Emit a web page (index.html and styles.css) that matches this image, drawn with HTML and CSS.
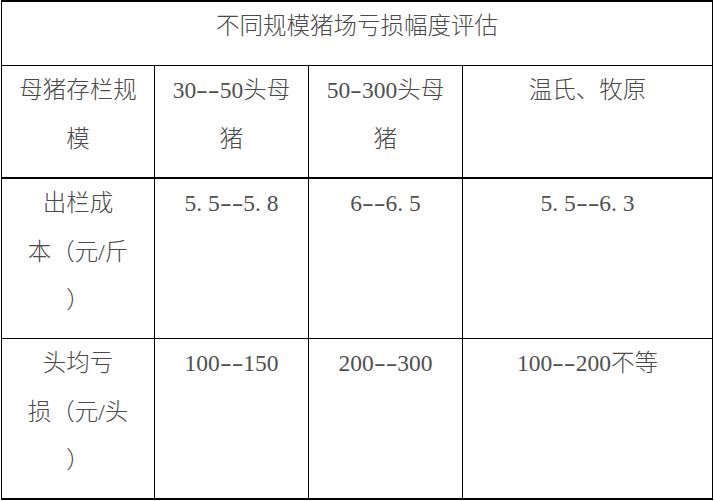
FILE: index.html
```html
<!DOCTYPE html>
<html lang="zh-CN">
<head>
<meta charset="utf-8">
<title>不同规模猪场亏损幅度评估</title>
<link rel="stylesheet" href="styles.css">
</head>
<body>
<div class="sheet">
  <div class="cell title">不同规模猪场亏损幅度评估</div>

  <div class="cell c1 r2">母猪存栏规<br>模</div>
  <div class="cell r2"><span class="num">30<span class="h h2">--</span>50</span>头母<br>猪</div>
  <div class="cell r2"><span class="num">50<span class="h h1">-</span>300</span>头母<br>猪</div>
  <div class="cell c4 r2">温氏、牧原</div>

  <div class="cell c1 r3">出栏成<br>本（元/斤<br>）</div>
  <div class="cell r3"><span class="num">5<span class="p">.</span>5<span class="h h2">--</span>5<span class="p">.</span>8</span></div>
  <div class="cell r3"><span class="num">6<span class="h h2">--</span>6<span class="p">.</span>5</span></div>
  <div class="cell c4 r3"><span class="num">5<span class="p">.</span>5<span class="h h2">--</span>6<span class="p">.</span>3</span></div>

  <div class="cell c1 r4">头均亏<br>损（元/头<br>）</div>
  <div class="cell r4"><span class="num">100<span class="h h2">--</span>150</span></div>
  <div class="cell r4"><span class="num">200<span class="h h2">--</span>300</span></div>
  <div class="cell c4 r4"><span class="num">100<span class="h h2">--</span>200</span>不等</div>
</div>
</body>
</html>
```

FILE: styles.css
```css
html, body {
  margin: 0;
  padding: 0;
  background: #ffffff;
}

body {
  font-family: "Liberation Serif", "Noto Sans CJK SC", serif;
  font-weight: 300;
  font-size: 23.5px;
  color: #4a4a4a;
}

.sheet {
  display: grid;
  grid-template-columns: 153px 154px 154px 250px;
  grid-template-rows: 64px 113px 160px 161px;
  width: 711px;
  margin-left: 1px;
  border-left: 1px solid #000;
  border-top: 2px solid #000;
}

.cell {
  box-sizing: border-box;
  border-right: 1px solid #000;
  border-bottom: 1px solid #000;
  text-align: center;
  line-height: 48.5px;
  padding: 0;
  overflow: hidden;
}

.title {
  grid-column: 1 / span 4;
}

.r2,
.r4 {
  border-bottom-width: 2px;
}

.num {
  font-family: "Liberation Serif", serif;
  font-weight: 400;
  color: #505050;
}

.h {
  display: inline-block;
  transform: scaleX(1.5);
  transform-origin: 0 50%;
}

.h2 {
  margin-right: 0.333em;
}

.h1 {
  margin-right: 0.167em;
}

.p {
  letter-spacing: 0.25em;
}
```
